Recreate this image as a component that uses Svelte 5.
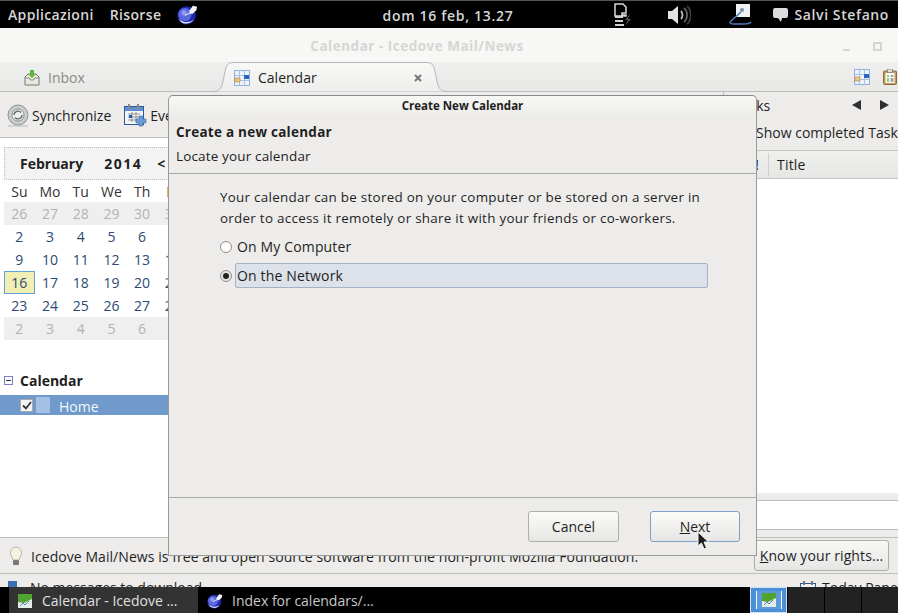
<script>
  const weekdays = ["Su", "Mo", "Tu", "We", "Th", "Fr", "Sa"];
  const weeks = [
    [26, 27, 28, 29, 30, 31, 1],
    [2, 3, 4, 5, 6, 7, 8],
    [9, 10, 11, 12, 13, 14, 15],
    [16, 17, 18, 19, 20, 21, 22],
    [23, 24, 25, 26, 27, 28, 1],
    [2, 3, 4, 5, 6, 7, 8]
  ];
</script>

{#snippet globe(size)}
  <svg width={size} height={size} viewBox="0 0 24 24">
    <circle cx="11" cy="13" r="10.500" fill="#1f2ab0" />
    <circle cx="9" cy="12" r="7.500" fill="#5c68e0" />
    <circle cx="8" cy="10" r="3" fill="#8f99f0" />
    <path d="M2 17c4 4 12 5 17 1-4 6-14 6-17-1z" fill="#e3e6fb" />
    <path d="M14 8l4-6 5 1-1 4-4 4-3 0z" fill="#f4f4f4" />
    <path d="M9 13l6-3" stroke="#fff" stroke-width="1" />
  </svg>
{/snippet}

{#snippet calGrid()}
  <svg width="16" height="16" viewBox="0 0 16 16">
    <rect x=".5" y=".5" width="15" height="15" fill="#eef3fb" stroke="#8fb0dd" />
    <path d="M.5 5.5h15M.5 10.500h15M5.500 .5v15M10.500 .5v15" stroke="#a9c3e6" />
    <rect x="1" y="8" width="5" height="4" fill="#eec77f" stroke="#b08b3e" stroke-width=".6" />
    <rect x="10" y="5" width="5" height="4" fill="#2a64bd" />
  </svg>
{/snippet}

{#snippet appIcon()}
  <svg width="14" height="14" viewBox="0 0 14 14">
    <rect width="14" height="14" fill="#e4ecec" />
    <path d="M0 0h14v5L6 9 0 8z" fill="#4fa32e" />
    <path d="M2 12l3-3 2 2 4-4" stroke="#5b7fb5" fill="none" />
  </svg>
{/snippet}

<div class="screen">
  <header class="topbar">
    <div class="top-left">
      <span>Applicazioni</span>
      <span>Risorse</span>
      <span class="top-globe">{@render globe(21)}</span>
    </div>
    <div class="clock">dom 16 feb, 13.27</div>
    <div class="tray">
      <svg class="t-batt" width="18" height="24" viewBox="0 0 18 24">
        <path d="M1 1h8l3 3v6H8v2h4v1H1z" fill="none" stroke="#d8d8d8" stroke-width="1.500" />
        <path d="M1 13h8v2H1zM1 17h8v2H1zM1 21h9v2H1z" fill="#d0d0d0" />
        <path d="M16 11l-5 6h3l-3 6 6-7h-3z" fill="#555" />
      </svg>
      <svg class="t-vol" width="24" height="20" viewBox="0 0 24 20">
        <path d="M1 6h4l6-5v18l-6-5H1z" fill="#e2e2e2" />
        <path d="M14 6c2 2 2 6 0 8" stroke="#bbb" stroke-width="1.800" fill="none" />
        <path d="M17 3c4 3 4 11 0 14" stroke="#666" stroke-width="1.800" fill="none" />
        <path d="M20 1c5 4 5 14 0 18" stroke="#3c3c3c" stroke-width="1.800" fill="none" />
      </svg>
      <svg class="t-net" width="23" height="22" viewBox="0 0 23 22">
        <rect x="7" y="0" width="14" height="13" fill="#f1f1f1" />
        <circle cx="13" cy="6" r="2" fill="#7a93b8" />
        <path d="M12 8L2 17c-2 2 0 3 3 3h10c3 0 6-1 7-2" stroke="#4a7ab8" stroke-width="1.600" fill="none" />
      </svg>
      <svg class="t-chat" width="15" height="14" viewBox="0 0 15 14">
        <path d="M2 0h11a2 2 0 0 1 2 2v6a2 2 0 0 1-2 2H9l-1 4-3-4H2a2 2 0 0 1-2-2V2a2 2 0 0 1 2-2z" fill="#dcdcdc" />
      </svg>
      <span>Salvi Stefano</span>
    </div>
  </header>

  <div class="titlebar">
    <span class="title">Calendar - Icedove Mail/News</span>
    <span class="win-min"></span>
    <span class="win-max"></span>
  </div>

  <div class="tabbar">
    <div class="tab-inbox">
      <svg width="16" height="16" viewBox="0 0 16 16">
        <path d="M1 7l3-3h8l3 3v8H1z" fill="#e9e7df" stroke="#77776c" />
        <path d="M1.500 8h4l1 2h3l1-2h4" fill="none" stroke="#8a8a80" />
        <path d="M6 0h4v4h2L8 8 4 4h2z" fill="#5fb83a" />
      </svg>
      <span>Inbox</span>
    </div>
    <div class="tab-cal">
      <svg class="tab-shape" width="234" height="30" viewBox="0 0 234 30">
        <defs>
          <linearGradient id="tabfill" x1="0" y1="0" x2="0" y2="1">
            <stop offset="0" stop-color="#f8f8f7" />
            <stop offset="1" stop-color="#eeeeec" />
          </linearGradient>
        </defs>
        <path d="M0 29.500c5 0 7-2 9-6l4-18c1-3 3-5 7-5h194c4 0 6 2 7 5l4 18c2 4 4 6 9 6" fill="url(#tabfill)" stroke="#b3b7bd" />
      </svg>
      {@render calGrid()}
      <span class="tab-label">Calendar</span>
      <svg class="tab-x" width="8" height="8" viewBox="0 0 8 8">
        <path d="M1 1l6 6M7 1L1 7" stroke="#777" stroke-width="2" />
      </svg>
    </div>
    <div class="tab-right">
      {@render calGrid()}
      <svg width="14" height="16" viewBox="0 0 14 16">
        <rect x=".5" y="2" width="13" height="13.500" rx="1" fill="#c79a64" stroke="#8c6a3c" />
        <rect x="2.500" y="4" width="9" height="10" fill="#fbfbf4" />
        <rect x="4.500" y="0" width="5" height="3.500" fill="#ddd" stroke="#777" stroke-width=".7" />
        <path d="M4 7h2M4 10h2M4 12h2" stroke="#1f9a2c" />
        <path d="M7.500 7h3M7.500 10h3M7.500 12h3" stroke="#555" />
      </svg>
    </div>
  </div>

  <div class="workspace">
    <div class="left-col">
      <div class="toolbar">
        <div class="tool">
          <svg width="22" height="23" viewBox="0 0 22 23">
            <circle cx="11" cy="11" r="10" fill="#c9cccc" stroke="#8f9494" />
            <circle cx="11" cy="11" r="6" fill="#eef0f0" stroke="#8f9494" />
            <path d="M7 11a4 4 0 0 1 7-2.500M15 11a4 4 0 0 1-7 2.500" stroke="#5e6464" stroke-width="1.300" fill="none" />
            <path d="M1 22h20" stroke="#b5b8b8" />
          </svg>
          <span>Synchronize</span>
        </div>
        <div class="tool">
          <svg width="23" height="23" viewBox="0 0 23 23">
            <rect x=".5" y="2.500" width="19" height="18" fill="#f3f4f6" stroke="#2f5a96" />
            <rect x="1" y="3" width="18" height="4" fill="#5f8fd0" />
            <path d="M5 0v5M14 0v5" stroke="#8a8a8a" stroke-width="2" />
            <path d="M4 10h12M4 13h12M4 16h12M8 8v10M12 8v10" stroke="#7d7d7d" stroke-width=".8" />
            <rect x="5" y="11" width="3" height="3" fill="#2a5aa8" />
            <path d="M15 12h4v3h3v4h-3v3h-4v-3h-3v-4h3z" fill="#6c9bd6" stroke="#3d6ea8" stroke-width=".6" />
          </svg>
          <span>Event</span>
        </div>
      </div>
      <div class="sidebar">
        <div class="month-head">
          <b>February</b>
          <b class="year">2014</b>
          <b class="prev">&lt;</b>
        </div>
        <div class="week dow">
          {#each weekdays as d}<span>{d}</span>{/each}
        </div>
        {#each weeks as week, i}
          <div class="week" class:other={i === 0 || i === 5}>
            {#each week as n}
              <span class:today={i === 3 && n === 16}>{n}</span>
            {/each}
          </div>
        {/each}
        <div class="cal-head">
          <span class="twisty"></span>
          <b>Calendar</b>
        </div>
        <div class="cal-row">
          <span class="check">
            <svg width="10" height="9" viewBox="0 0 10 9">
              <path d="M1 4.500l3 3L9 1" stroke="#333" stroke-width="1.800" fill="none" />
            </svg>
          </span>
          <span class="swatch"></span>
          <span class="home">Home</span>
        </div>
      </div>
    </div>

    <aside class="tasks">
      <div class="tasks-head">
        <span>Tasks</span>
        <span class="arrows">
          <svg width="10" height="10" viewBox="0 0 10 10"><path d="M9 0v10L0 5z" fill="#2e2e2e" /></svg>
          <svg width="10" height="10" viewBox="0 0 10 10"><path d="M1 0v10l9-5z" fill="#2e2e2e" /></svg>
        </span>
      </div>
      <div class="show-done">Show completed Tasks</div>
      <div class="tree-head">
        <span class="col-mark">!</span>
        <span class="col-title">Title</span>
      </div>
      <div class="tree-body"></div>
      <div class="tree-gap"></div>
      <div class="quick-add"></div>
      <div class="tree-end"></div>
    </aside>
  </div>

  <div class="notice">
    <svg width="14" height="20" viewBox="0 0 14 20">
      <path d="M7 1a6 6 0 0 1 4 10l-1 3H4l-1-3A6 6 0 0 1 7 1z" fill="#f5f3e4" stroke="#b9b9a8" />
      <rect x="4" y="14" width="6" height="5" rx="1" fill="#777" />
    </svg>
    <span class="notice-text">Icedove Mail/News is free and open source software from the non-profit Mozilla Foundation.</span>
    <button class="rights"><u>K</u>now your rights...</button>
  </div>

  <div class="status">
    <span class="status-left">
      <svg width="14" height="14" viewBox="0 0 14 14"><rect x="5" y="0" width="9" height="12" fill="#3d6eb0" /><rect y="6" width="8" height="8" fill="#8aa8d0" /></svg>
      <span>No messages to download</span>
    </span>
    <span class="status-right">
      <svg width="16" height="16" viewBox="0 0 16 16"><rect x=".5" y="2.500" width="15" height="13" fill="#f3f4f6" stroke="#2f5a96" /><path d="M4 0v4M12 0v4" stroke="#777" stroke-width="2" /></svg>
      <span>Today Pane</span>
    </span>
  </div>

  <footer class="panel">
    <div class="task active">
      {@render appIcon()}
      <span>Calendar - Icedove ...</span>
    </div>
    <div class="task">
      {@render globe(16)}
      <span>Index for calendars/...</span>
    </div>
    <div class="pager">
      <div class="ws current"><span class="ws-inner">{@render appIcon()}</span></div>
      <div class="ws"></div>
      <div class="ws"></div>
      <div class="ws"></div>
    </div>
  </footer>

  <section class="dialog">
    <div class="dlg-title">Create New Calendar</div>
    <div class="dlg-head">
      <b>Create a new calendar</b>
      <span>Locate your calendar</span>
    </div>
    <div class="dlg-body">
      <p>Your calendar can be stored on your computer or be stored on a server in order to access it remotely or share it with your friends or co-workers.</p>
      <div class="radio-row">
        <span class="radio"></span>
        <span class="radio-label">On My Computer</span>
      </div>
      <div class="radio-row">
        <span class="radio on"></span>
        <span class="radio-label selected">On the Network</span>
      </div>
    </div>
    <div class="dlg-foot">
      <button class="btn">Cancel</button>
      <button class="btn focus"><u>N</u>ext</button>
    </div>
  </section>

  <svg class="cursor" width="13" height="19" viewBox="0 0 13 19">
    <path d="M1 1v14l3.500-3 2.500 6 2.500-1-2.500-6h4.500z" fill="#1c1c1c" stroke="#f2f2f2" />
  </svg>
</div>

<style>
  :global(body) {
    margin: 0;
  }
  .screen {
    position: relative;
    width: 898px;
    height: 613px;
    overflow: hidden;
    display: flex;
    flex-direction: column;
    background: #edecea;
    color: #1f1f1f;
    font-family: "Open Sans", "Noto Sans", sans-serif;
    font-size: 14px;
  }
  svg {
    display: block;
    flex: none;
  }
  b {
    font-weight: 700;
  }

  .topbar {
    flex: none;
    height: 27px;
    background: #000;
    border-top: 1px solid #555;
    color: #d6d6d6;
    display: grid;
    grid-template-columns: 1fr auto 1fr;
    align-items: center;
    font-weight: 600;
    font-size: 14px;
    letter-spacing: 0.35px;
  }
  .top-left {
    display: flex;
    align-items: center;
    gap: 16px;
    padding-left: 8px;
  }
  .clock {
    margin-left: -2px;
    padding-top: 1px;
    letter-spacing: 0.7px;
  }
  .tray {
    display: flex;
    align-items: center;
    justify-content: flex-end;
    padding-right: 9px;
    letter-spacing: 0.6px;
  }
  .t-batt {
    margin-right: 35px;
  }
  .t-vol {
    margin-right: 38px;
  }
  .t-net {
    margin-right: 21px;
  }
  .t-chat {
    margin-right: 7px;
  }

  .titlebar {
    flex: none;
    height: 34px;
    box-sizing: border-box;
    padding: 2px 64px 0 0;
    background: #f7f7f5;
    position: relative;
    display: flex;
    align-items: center;
    justify-content: center;
    color: #d6d6d4;
    font-weight: 700;
    font-size: 13.500px;
    letter-spacing: 0.5px;
  }
  .win-min {
    position: absolute;
    left: 843px;
    top: 21px;
    width: 7px;
    height: 2px;
    background: #d5d5d3;
  }
  .win-max {
    position: absolute;
    left: 873px;
    top: 14px;
    width: 5px;
    height: 5px;
    border: 2px solid #d5d5d3;
  }

  .tabbar {
    flex: none;
    height: 30px;
    box-sizing: border-box;
    background: linear-gradient(#efefed, #e8e8e6);
    border-bottom: 1px solid #bdbdbb;
    display: flex;
    align-items: flex-start;
  }
  .tab-inbox {
    width: 213px;
    height: 30px;
    box-sizing: border-box;
    padding: 1px 0 0 24px;
    display: flex;
    align-items: center;
    gap: 8px;
    color: #8a8a88;
  }
  .tab-cal {
    position: relative;
    width: 234px;
    height: 30px;
    box-sizing: border-box;
    padding: 1px 25px 0 21px;
    display: flex;
    align-items: center;
  }
  .tab-shape {
    position: absolute;
    left: 0;
    top: 0;
  }
  .tab-cal > svg:not(.tab-shape),
  .tab-label {
    position: relative;
  }
  .tab-label {
    margin-left: 8px;
    flex: 1;
  }
  .tab-right {
    margin-left: auto;
    height: 30px;
    padding-right: 1px;
    display: flex;
    align-items: center;
    gap: 13px;
  }

  .workspace {
    flex: none;
    height: 445px;
    display: flex;
  }
  .left-col {
    width: 723px;
    display: flex;
    flex-direction: column;
  }
  .toolbar {
    flex: none;
    height: 46px;
    box-sizing: border-box;
    border-bottom: 1px solid #bdbdbb;
    display: flex;
    align-items: center;
    padding: 2px 0 0 7px;
    gap: 13px;
  }
  .tool {
    display: flex;
    align-items: center;
    gap: 3px;
  }
  .sidebar {
    flex: 1;
    background: #fff;
    padding-top: 9px;
  }
  .month-head {
    margin-left: 4px;
    width: 215px;
    height: 33px;
    box-sizing: border-box;
    background: #f3f3f3;
    border: 1px dotted #bbb;
    display: flex;
    align-items: center;
    padding-left: 15px;
  }
  .year {
    margin-left: 21px;
    letter-spacing: 1.5px;
  }
  .prev {
    margin-left: 15px;
  }
  .week {
    margin-left: 4px;
    width: 215px;
    height: 23px;
    display: grid;
    grid-template-columns: repeat(7, 30.700px);
    text-align: center;
    line-height: 23px;
    color: #2c4a73;
  }
  .week span {
    box-sizing: border-box;
  }
  .dow {
    height: 22px;
    color: #333;
  }
  .other {
    background: #efefef;
    color: #b2b2b2;
  }
  .today {
    background: #f2efb5;
    border: 1px solid #62a3d6;
    line-height: 21px;
  }
  .cal-head {
    margin-top: 29px;
    height: 26px;
    box-sizing: border-box;
    padding: 0 0 3px 4px;
    display: flex;
    align-items: center;
    gap: 7px;
  }
  .twisty {
    width: 7px;
    height: 7px;
    border: 1px solid #7c7cc8;
    position: relative;
    background: linear-gradient(90deg, transparent 1px, #333 1px, #333 6px, transparent 6px) center / 100% 1px no-repeat;
  }
  .cal-row {
    height: 20px;
    background: #6f9acb;
    display: flex;
    align-items: center;
    padding-left: 20px;
    color: #f4f7fb;
  }
  .check {
    width: 11px;
    height: 11px;
    border: 1px solid #aaa;
    background: #f4f4f4;
    display: flex;
    align-items: center;
    justify-content: center;
  }
  .swatch {
    width: 14px;
    height: 16px;
    background: #a4c0e2;
    margin-left: 3px;
  }
  .home {
    margin-left: 9px;
    padding-top: 3px;
  }

  .tasks {
    width: 175px;
    box-sizing: border-box;
    border-left: 1px solid #bdbdbb;
    display: flex;
    flex-direction: column;
  }
  .tasks-head {
    height: 26px;
    display: flex;
    align-items: center;
    justify-content: space-between;
    padding: 0 9px 0 10px;
  }
  .arrows {
    display: flex;
    gap: 17px;
  }
  .show-done {
    height: 32px;
    box-sizing: border-box;
    padding: 0 0 4px 32px;
    display: flex;
    align-items: center;
    white-space: nowrap;
    overflow: hidden;
  }
  .tree-head {
    height: 29px;
    box-sizing: border-box;
    border-top: 1px solid #c4c4c2;
    border-bottom: 1px solid #c4c4c2;
    background: linear-gradient(#f0f0ee, #e6e6e4);
    display: flex;
    align-items: center;
  }
  .col-mark {
    width: 44px;
    text-align: right;
    padding-right: 9px;
    box-sizing: border-box;
  }
  .col-title {
    padding-left: 8px;
    border-left: 1px solid #cfcfcd;
    line-height: 24px;
    letter-spacing: 0.2px;
  }
  .tree-body {
    height: 314px;
    background: #fff;
  }
  .tree-gap {
    height: 7px;
    background: #edecea;
  }
  .quick-add {
    height: 30px;
    box-sizing: border-box;
    background: #fff;
    border-top: 1px solid #bbb;
    border-bottom: 1px solid #bbb;
  }
  .tree-end {
    flex: 1;
  }

  .notice {
    flex: none;
    height: 37px;
    box-sizing: border-box;
    border-top: 1px solid #bdbdbb;
    border-bottom: 1px solid #bdbdbb;
    display: flex;
    align-items: center;
    padding: 0 9px 0 9px;
    white-space: nowrap;
  }
  .notice-text {
    margin-left: 8px;
    flex: 1;
    padding-top: 2px;
    letter-spacing: 0.06px;
  }
  .rights {
    height: 31px;
    width: 135px;
    padding: 0;
    font: inherit;
    letter-spacing: 0.1px;
    color: inherit;
    background: linear-gradient(#f8f8f7, #e6e6e4);
    border: 1px solid #aeaeac;
    border-radius: 3px;
  }

  .status {
    flex: none;
    height: 13px;
    overflow: hidden;
    display: flex;
    justify-content: space-between;
    padding: 4px 0 0 3px;
    box-sizing: border-box;
  }
  .status-left,
  .status-right {
    display: flex;
    align-items: flex-start;
    gap: 13px;
    line-height: 20px;
    white-space: nowrap;
  }
  .status-left svg,
  .status-right svg {
    margin-top: 3px;
  }
  .status-right {
    width: 98px;
    gap: 6px;
  }

  .panel {
    flex: 1;
    background: #000;
    color: #c8c8c8;
    display: flex;
    align-items: stretch;
    padding-left: 9px;
    white-space: nowrap;
  }
  .task {
    width: 189px;
    box-sizing: border-box;
    padding: 1px 0 0 9px;
    display: flex;
    align-items: center;
    gap: 9px;
  }
  .task.active {
    background: #333;
    color: #e0e0e0;
    gap: 10px;
  }
  .pager {
    margin-left: auto;
    display: flex;
  }
  .ws {
    width: 36px;
    margin-left: 1px;
    background: #222;
  }
  .ws.current {
    width: 37px;
    margin-left: 0;
    background: #4a90d9;
    border: 1px solid #cfe3f7;
    box-sizing: border-box;
    display: flex;
    align-items: center;
    justify-content: center;
  }
  .ws-inner {
    padding: 2px 5px;
    border-left: 1px solid #fff;
    border-right: 1px solid #fff;
    background: #5a9ad9;
  }

  .dialog {
    position: absolute;
    left: 168px;
    top: 95px;
    width: 589px;
    height: 461px;
    box-sizing: border-box;
    background: #edecea;
    border: 1px solid #9a9a98;
    border-top-color: #888;
    border-radius: 5px 5px 0 0;
    display: flex;
    flex-direction: column;
  }
  .dlg-title {
    height: 21px;
    flex: none;
    text-align: center;
    font-weight: 700;
    font-size: 11.500px;
    line-height: 20px;
    background: linear-gradient(#f7f7f5, #edecea);
    border-radius: 5px 5px 0 0;
  }
  .dlg-head {
    height: 57px;
    flex: none;
    box-sizing: border-box;
    padding: 6px 0 0 7px;
    border-bottom: 1px solid #a9a9a7;
    display: flex;
    flex-direction: column;
    gap: 6px;
    font-size: 13.500px;
    letter-spacing: 0.15px;
  }
  .dlg-head b {
    letter-spacing: 0.25px;
  }
  .dlg-body {
    flex: 1;
    padding: 13px 48px 0 51px;
    border-bottom: 1px solid #a9a9a7;
  }
  .dlg-body p {
    margin: 0;
    line-height: 21px;
    font-size: 13.400px;
    letter-spacing: 0.28px;
  }
  .radio-row {
    display: flex;
    align-items: center;
    height: 25px;
    margin-top: 4px;
    letter-spacing: 0.15px;
  }
  .radio-row:first-of-type {
    margin-top: 5px;
  }
  .radio {
    flex: none;
    width: 10px;
    height: 10px;
    border: 1px solid #8f8f8d;
    border-radius: 50%;
    background: #fff;
    margin-right: 3px;
    position: relative;
  }
  .radio.on {
    background: #e6e6e6;
  }
  .radio.on::after {
    content: "";
    position: absolute;
    inset: 2px;
    border-radius: 50%;
    background: #222;
  }
  .radio-label {
    flex: 1;
    padding-left: 1px;
    height: 23px;
    line-height: 23px;
    border: 1px solid transparent;
    border-radius: 2px;
  }
  .radio-label.selected {
    background: #dde1ea;
    border-color: #a4b2c8;
  }
  .dlg-foot {
    height: 57px;
    flex: none;
    display: flex;
    justify-content: flex-end;
    align-items: center;
    gap: 31px;
    padding-right: 16px;
  }
  .btn {
    width: 91px;
    height: 31px;
    padding: 0;
    font: inherit;
    color: inherit;
    background: linear-gradient(#fbfbfa, #e6e6e4);
    border: 1px solid #aeaeac;
    border-radius: 3px;
  }
  .btn.focus {
    width: 90px;
    border-color: #7e9fc9;
  }

  .cursor {
    position: absolute;
    left: 697px;
    top: 531px;
  }
</style>
